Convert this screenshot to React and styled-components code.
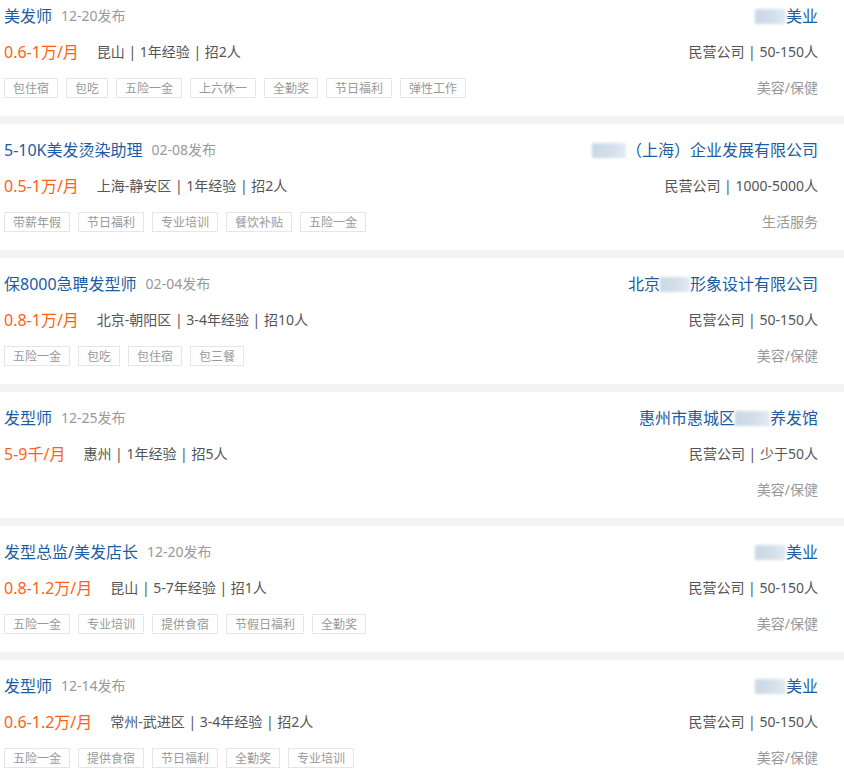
import React from 'react'
import styled, { createGlobalStyle } from 'styled-components'

const GlobalStyle = createGlobalStyle`
  html, body {
    margin: 0;
    padding: 0;
    background: #f4f4f4;
    font-family: "Noto Sans", "Noto Sans CJK SC", sans-serif;
    overflow: hidden;
  }
`

const List = styled.div`
  margin-top: -10px;
  display: flex;
  flex-direction: column;
  gap: 8px;
`

const Card = styled.div`
  background: #fff;
  padding: 16px 26px 18px 4px;
  display: flex;
  flex-direction: column;
  gap: 16px;
`

const Row = styled.div`
  display: flex;
  justify-content: space-between;
  align-items: center;
  height: 20px;
`

const Left = styled.div`
  display: flex;
  align-items: center;
  white-space: nowrap;
`

const Title = styled.span`
  font-size: 16px;
  color: #1b5da3;
  line-height: 20px;
`

const Date = styled.span`
  font-size: 14px;
  color: #999;
  margin-left: 9px;
  line-height: 20px;
`

const Salary = styled.span`
  font-size: 16px;
  color: #ff6215;
  margin-right: 18px;
  line-height: 20px;
`

const Info = styled.span`
  font-size: 14px;
  color: #555;
  line-height: 20px;
`

const Company = styled.span`
  font-size: 16px;
  color: #1b5da3;
  line-height: 20px;
  display: flex;
  align-items: center;
`

const Blur = styled.span`
  display: inline-block;
  width: ${p => p.w}px;
  height: 15px;
  background: linear-gradient(90deg, #c9d8e6 0%, #d2dfea 55%, #e3eaf1 100%);
  filter: blur(1.5px);
`

const Scale = styled.span`
  font-size: 14px;
  color: #555;
  line-height: 20px;
`

const Tags = styled.div`
  display: flex;
  gap: 8px;
`

const Tag = styled.span`
  font-size: 12px;
  color: #999;
  border: 1px solid #e6e6e6;
  padding: 0 8px;
  height: 18px;
  line-height: 18px;
  font-family: "Noto Sans CJK SC", sans-serif;
`

const Industry = styled.span`
  font-size: 14px;
  color: #999;
  line-height: 20px;
`

const jobs = [
  {
    title: '美发师', date: '12-20发布', salary: '0.6-1万/月', info: '昆山 | 1年经验 | 招2人',
    company: [['b', 31], '美业'], scale: '民营公司 | 50-150人', industry: '美容/保健',
    tags: ['包住宿', '包吃', '五险一金', '上六休一', '全勤奖', '节日福利', '弹性工作'],
  },
  {
    title: '5-10K美发烫染助理', date: '02-08发布', salary: '0.5-1万/月', info: '上海-静安区 | 1年经验 | 招2人',
    company: [['b', 34], '（上海）企业发展有限公司'], scale: '民营公司 | 1000-5000人', industry: '生活服务',
    tags: ['带薪年假', '节日福利', '专业培训', '餐饮补贴', '五险一金'],
  },
  {
    title: '保8000急聘发型师', date: '02-04发布', salary: '0.8-1万/月', info: '北京-朝阳区 | 3-4年经验 | 招10人',
    company: ['北京', ['b', 30], '形象设计有限公司'], scale: '民营公司 | 50-150人', industry: '美容/保健',
    tags: ['五险一金', '包吃', '包住宿', '包三餐'],
  },
  {
    title: '发型师', date: '12-25发布', salary: '5-9千/月', info: '惠州 | 1年经验 | 招5人',
    company: ['惠州市惠城区', ['b', 35], '养发馆'], scale: '民营公司 | 少于50人', industry: '美容/保健',
    tags: [],
  },
  {
    title: '发型总监/美发店长', date: '12-20发布', salary: '0.8-1.2万/月', info: '昆山 | 5-7年经验 | 招1人',
    company: [['b', 31], '美业'], scale: '民营公司 | 50-150人', industry: '美容/保健',
    tags: ['五险一金', '专业培训', '提供食宿', '节假日福利', '全勤奖'],
  },
  {
    title: '发型师', date: '12-14发布', salary: '0.6-1.2万/月', info: '常州-武进区 | 3-4年经验 | 招2人',
    company: [['b', 31], '美业'], scale: '民营公司 | 50-150人', industry: '美容/保健',
    tags: ['五险一金', '提供食宿', '节日福利', '全勤奖', '专业培训'],
  },
]

function JobCard({ job }) {
  return (
    <Card>
      <Row>
        <Left>
          <Title>{job.title}</Title>
          <Date>{job.date}</Date>
        </Left>
        <Company>
          {job.company.map((part, i) =>
            Array.isArray(part) ? <Blur key={i} w={part[1]} /> : <span key={i}>{part}</span>
          )}
        </Company>
      </Row>
      <Row>
        <Left>
          <Salary>{job.salary}</Salary>
          <Info>{job.info}</Info>
        </Left>
        <Scale>{job.scale}</Scale>
      </Row>
      <Row>
        <Tags>
          {job.tags.map(t => <Tag key={t}>{t}</Tag>)}
        </Tags>
        <Industry>{job.industry}</Industry>
      </Row>
    </Card>
  )
}

export default function App() {
  return (
    <>
      <GlobalStyle />
      <List>
        {jobs.map((job, i) => <JobCard key={i} job={job} />)}
      </List>
    </>
  )
}
